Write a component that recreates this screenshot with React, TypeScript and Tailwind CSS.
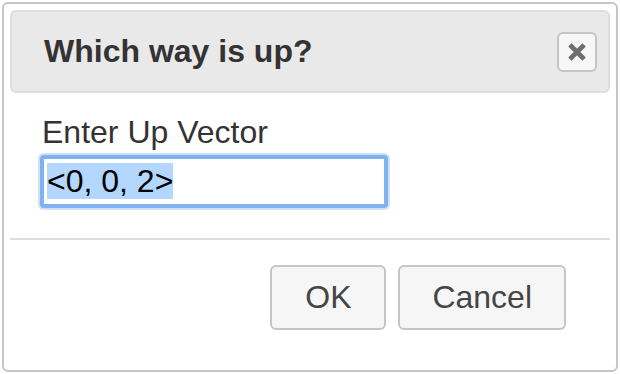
import React from 'react';

const CloseIcon: React.FC = () => (
  <svg width="18" height="18" viewBox="0 0 18 18" aria-hidden="true">
    <path d="M3.5 3.5 L14.5 14.5 M14.5 3.5 L3.5 14.5" stroke="#6e6e6e" strokeWidth="4.6" strokeLinecap="square" />
  </svg>
);

const DialogButton: React.FC<{ label: string; className?: string }> = ({ label, className = '' }) => (
  <button
    type="button"
    className={`rounded-[6px] border-2 border-[#c5c5c5] bg-[#f6f6f6] px-[32px] py-[12px] text-center text-[32px] leading-[37px] text-[#454545] ${className}`}
  >
    {label}
  </button>
);

/**
 * "Which way is up?" prompt dialog (jQuery UI look, 2x scale)
 */
export default function App() {
  return (
    <div className="h-[374px] w-[620px] bg-white pl-[2px] pt-[2px] font-['Liberation_Sans',Arial,sans-serif]">
      <div className="flex h-[370px] w-[616px] flex-col rounded-[6px] border-2 border-[#c5c5c5] bg-white p-[6px]">
        {/* Title bar */}
        <div className="flex h-[83px] items-center justify-between rounded-[6px] border-2 border-[#dddddd] bg-[#e9e9e9] pl-[32px] pr-[11px]">
          <span className="text-[32px] font-bold leading-[37px] text-[#333333]">Which way is up?</span>
          <button
            type="button"
            aria-label="Close"
            className="flex h-[40px] w-[40px] items-center justify-center rounded-[6px] border-2 border-[#c5c5c5] bg-[#f6f6f6]"
          >
            <CloseIcon />
          </button>
        </div>

        {/* Content */}
        <div className="flex flex-col px-[30px] pt-[21px]">
          <label className="ml-[2px] text-[32px] leading-[37px] text-[#333333]">Enter Up Vector</label>
          <div className="mt-[4px] w-[348px] rounded-[4px] border-4 border-[#7fb2ee] bg-white px-[3px] py-[4px] shadow-[0_0_0_2px_#cde0f7]">
            <span className="bg-[#b3d7ff] text-[32px] leading-[37px] text-black">&lt;0, 0, 2&gt;</span>
          </div>
        </div>

        {/* Button pane */}
        <div className="mt-[30px] flex justify-end gap-[12px] border-t-2 border-[#dddddd] pr-[44px] pt-[25px]">
          <DialogButton label="OK" className="w-[116px]" />
          <DialogButton label="Cancel" />
        </div>
      </div>
    </div>
  );
}
